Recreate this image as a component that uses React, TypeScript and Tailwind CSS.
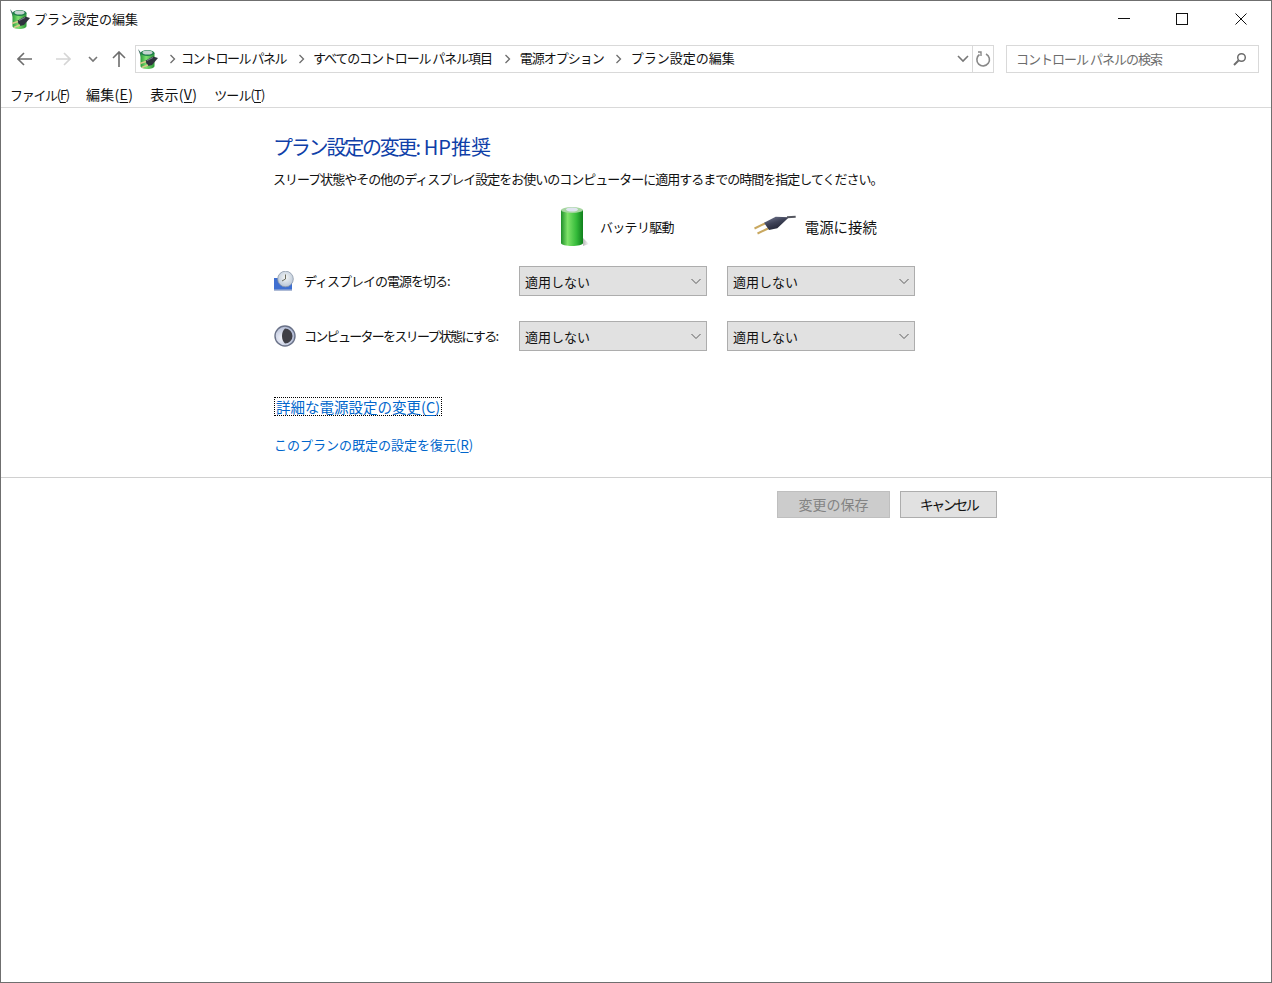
import React from 'react'

function PowerIcon({ id }: { id: string }) {
  return (
    <svg width="22" height="22" viewBox="0 0 22 22">
      <defs>
        <linearGradient id={id} x1="0" x2="1" y1="0" y2="0">
          <stop offset="0" stopColor="#2a9a3a" />
          <stop offset="0.4" stopColor="#7fe070" />
          <stop offset="1" stopColor="#2a9638" />
        </linearGradient>
      </defs>
      <path d="M1 1 L5 6 L4 9 Z" fill="#3f6a62" />
      <path d="M3.500 5 V18 C3.500 22 17.500 22 17.500 18 V5 Z" fill={`url(#${id})`} />
      <ellipse cx="10.500" cy="5" rx="7" ry="3" fill="#1f7f4a" />
      <ellipse cx="10.500" cy="4.500" rx="5" ry="2" fill="#c4d4d0" />
      <path d="M8 13 L16 8.500 L21 10 L15 17 L11 18 Z" fill="#2f333d" />
      <path d="M9 13.500 L3 15.500 M11 17 L5 19.500" stroke="#d8c88a" strokeWidth="1.600" />
      <path d="M10 12.500 L16 9.500" stroke="#7b8090" strokeWidth="1" />
    </svg>
  )
}

function Chevron({ className = '' }: { className?: string }) {
  return (
    <svg width="12" height="12" viewBox="0 0 12 12" className={className}>
      <path d="M1.500 4 L6 8.500 L10.500 4" fill="none" stroke="currentColor" strokeWidth="1" />
    </svg>
  )
}

function Crumb() {
  return (
    <svg width="7" height="10" viewBox="0 0 7 10" className="shrink-0 text-[#6d6d6d]">
      <path d="M1.500 1 L5.500 5 L1.500 9" fill="none" stroke="currentColor" strokeWidth="1.300" />
    </svg>
  )
}

function Dropdown() {
  return (
    <div className="flex h-[30px] w-[188px] items-center justify-between border border-[#adadad] bg-[#e1e1e1] pl-[5px] pr-[4px] text-[13px] leading-none">
      <span>適用しない</span>
      <Chevron className="text-[#5c5c5c]" />
    </div>
  )
}

function Underlined({ label, mark }: { label: string; mark: string }) {
  return (
    <>
      {label}(<span className="underline underline-offset-2">{mark}</span>)
    </>
  )
}

export default function App() {
  return (
    <div className="flex h-[983px] w-[1272px] flex-col overflow-hidden border border-[#6f6f6f] bg-white font-['Noto_Sans_CJK_JP','Liberation_Sans',sans-serif] text-[13px] text-[#111]">
      {/* Title bar */}
      <div className="flex h-[36px] shrink-0 items-center pl-[8px]">
        <PowerIcon id="mug-title" />
        <span className="mb-[2px] ml-[3px] leading-none">プラン設定の編集</span>
        <div className="ml-auto flex items-center">
          <svg width="12" height="12" viewBox="0 0 12 12" className="mr-[46px]">
            <path d="M0 5.500 H12" stroke="#111" strokeWidth="1" />
          </svg>
          <svg width="12" height="12" viewBox="0 0 12 12" className="mr-[47px]">
            <rect x="0.500" y="0.500" width="11" height="11" fill="none" stroke="#111" strokeWidth="1" />
          </svg>
          <svg width="12" height="12" viewBox="0 0 12 12" className="mr-[24px]">
            <path d="M0.500 0.500 L11.500 11.500 M11.500 0.500 L0.500 11.500" stroke="#111" strokeWidth="1" />
          </svg>
        </div>
      </div>

      {/* Address row */}
      <div className="mt-[8px] flex h-[28px] shrink-0 items-center">
        <svg width="16" height="14" viewBox="0 0 16 14" className="ml-[16px] text-[#6d6d6d]">
          <path d="M1 7 H15 M7 1 L1 7 L7 13" fill="none" stroke="currentColor" strokeWidth="1.600" />
        </svg>
        <svg width="16" height="14" viewBox="0 0 16 14" className="ml-[22px] text-[#d5d5d5]">
          <path d="M1 7 H15 M9 1 L15 7 L9 13" fill="none" stroke="currentColor" strokeWidth="1.600" />
        </svg>
        <svg width="10" height="7" viewBox="0 0 10 7" className="ml-[17px] text-[#777]">
          <path d="M1 1 L5 5 L9 1" fill="none" stroke="currentColor" strokeWidth="1.600" />
        </svg>
        <svg width="14" height="16" viewBox="0 0 14 16" className="ml-[14px] text-[#6d6d6d]">
          <path d="M7 16 V1 M1 7 L7 1 L13 7" fill="none" stroke="currentColor" strokeWidth="1.600" />
        </svg>
        <div className="ml-[9px] flex h-[28px] w-[859px] items-center border border-[#d9d9d9] pl-[1px]">
          <PowerIcon id="mug-address" />
          <span className="ml-[10px]"><Crumb /></span>
          <span className="mb-[2px] ml-[5px] tracking-[-1.500px]">コントロール パネル</span>
          <span className="ml-[12px]"><Crumb /></span>
          <span className="mb-[2px] ml-[8px] tracking-[-1.100px]">すべてのコントロール パネル項目</span>
          <span className="ml-[12px]"><Crumb /></span>
          <span className="mb-[2px] ml-[9px] tracking-[-1px]">電源オプション</span>
          <span className="ml-[11px]"><Crumb /></span>
          <span className="mb-[2px] ml-[9px]">プラン設定の編集</span>
          <div className="ml-auto flex h-full items-center">
            <svg width="12" height="8" viewBox="0 0 12 8" className="mr-[3px] text-[#777]">
              <path d="M1 1 L6 6 L11 1" fill="none" stroke="currentColor" strokeWidth="1.600" />
            </svg>
            <div className="flex h-full w-[21px] items-center justify-center border-l border-[#d9d9d9]">
              <svg width="16" height="16" viewBox="0 0 16 16" className="text-[#888]">
                <path d="M4.500 3.500 A6.300 6.300 0 1 0 11 3" fill="none" stroke="currentColor" strokeWidth="1.600" />
                <path d="M3 1 L6 1 L6 5" fill="none" stroke="currentColor" strokeWidth="1.400" />
              </svg>
            </div>
          </div>
        </div>
        <div className="ml-[12px] flex h-[28px] w-[253px] items-center justify-between border border-[#d9d9d9] pl-[9px] pr-[11px] text-[#6d6d6d]">
          <span className="tracking-[-1px]">コントロール パネルの検索</span>
          <svg width="14" height="14" viewBox="0 0 14 14">
            <circle cx="8.500" cy="5.500" r="3.800" fill="none" stroke="currentColor" strokeWidth="1.500" />
            <path d="M5.500 8.500 L1 13" stroke="currentColor" strokeWidth="2" />
          </svg>
        </div>
      </div>

      {/* Menu bar */}
      <div className="mt-[10px] flex h-[25px] shrink-0 items-center border-b border-[#d9d9d9] pb-[2px] pl-[9px] leading-none">
        <span className="tracking-[-1.300px]"><Underlined label="ファイル" mark="F" /></span>
        <span className="ml-[17px] text-[14px] tracking-[0.300px]"><Underlined label="編集" mark="E" /></span>
        <span className="ml-[17px] text-[14px] tracking-[0.300px]"><Underlined label="表示" mark="V" /></span>
        <span className="ml-[17px] tracking-[-0.900px]"><Underlined label="ツール" mark="T" /></span>
      </div>

      {/* Plan settings */}
      <div className="flex flex-col pl-[273px]">
        <h1 className="-ml-[1px] mt-[25px] h-[28px] text-[20px] font-normal leading-[28px] text-[#0f3fa8]">
          <span className="tracking-[-2.200px]">プラン設定の変更:</span>
          <span className="ml-[5px]">HP推奨</span>
        </h1>
        <p className="-ml-[1px] mt-[8px] h-[20px] leading-[20px] tracking-[-1px]">
          スリープ状態やその他のディスプレイ設定をお使いのコンピューターに適用するまでの時間を指定してください。
        </p>

        {/* Column headers */}
        <div className="mt-[18px] flex h-[40px] items-center">
          <svg width="30" height="42" viewBox="0 0 30 42" className="ml-[285px]">
            <defs>
              <linearGradient id="battery" x1="0" x2="1" y1="0" y2="0">
                <stop offset="0" stopColor="#1f8f2a" />
                <stop offset="0.3" stopColor="#7fe36a" />
                <stop offset="0.7" stopColor="#35bb3a" />
                <stop offset="1" stopColor="#0f7f1c" />
              </linearGradient>
              <linearGradient id="batteryShade" x1="0" x2="1" y1="0" y2="0">
                <stop offset="0" stopColor="#b8b8b8" />
                <stop offset="1" stopColor="#ffffff" />
              </linearGradient>
            </defs>
            <path d="M24 32 L30 38 L24 40 Z" fill="url(#batteryShade)" />
            <path d="M2 4 V37 C2 41 24 41 24 37 V4 Z" fill="url(#battery)" />
            <ellipse cx="13" cy="4" rx="11" ry="3" fill="#a6d6a0" />
            <ellipse cx="13" cy="3.500" rx="6" ry="2" fill="#dfe4f0" />
          </svg>
          <span className="ml-[11px] tracking-[-0.700px]">バッテリ駆動</span>
          <svg width="44" height="24" viewBox="0 0 44 24" className="ml-[80px]">
            <defs>
              <linearGradient id="plug" x1="0" x2="0.600" y1="0" y2="1">
                <stop offset="0" stopColor="#7a7f98" />
                <stop offset="0.500" stopColor="#3f4358" />
                <stop offset="1" stopColor="#1f2130" />
              </linearGradient>
            </defs>
            <path d="M0.500 13.500 L11 8.500 M3.500 18.500 L14 13.500" stroke="#c9a860" strokeWidth="2" />
            <path d="M10 7.700 L21.700 1.700 L35 2.300 L23.300 13.300 L15 15 Z" fill="url(#plug)" />
            <path d="M33 2.300 L41.700 1.700" stroke="#54565f" strokeWidth="2" />
          </svg>
          <span className="ml-[7px] text-[14.400px]">電源に接続</span>
        </div>

        {/* Power timeout rows */}
        <div className="mt-[19px] flex items-center">
          <svg width="22" height="20" viewBox="0 0 22 20">
            <defs>
              <radialGradient id="clock" cx="0.500" cy="0.400" r="0.600">
                <stop offset="0" stopColor="#f4f6f4" />
                <stop offset="1" stopColor="#b9c6d8" />
              </radialGradient>
            </defs>
            <rect x="0" y="7" width="18" height="13" fill="#3f6fd0" />
            <rect x="0" y="18.500" width="18" height="1.500" fill="#aebbd6" />
            <circle cx="11.500" cy="8" r="7.800" fill="url(#clock)" stroke="#8d99aa" strokeWidth="0.800" />
            <path d="M11.500 3.500 V8 L8 10" fill="none" stroke="#6a6a5c" strokeWidth="1" />
          </svg>
          <span className="mb-[1px] ml-[8px] w-[215px] tracking-[-1px]">ディスプレイの電源を切る:</span>
          <Dropdown />
          <div className="w-[20px]" />
          <Dropdown />
        </div>
        <div className="mt-[25px] flex items-center">
          <svg width="22" height="22" viewBox="0 0 22 22">
            <defs>
              <radialGradient id="moon" cx="0.350" cy="0.600" r="0.700">
                <stop offset="0" stopColor="#f2f4fb" />
                <stop offset="1" stopColor="#aab4d0" />
              </radialGradient>
            </defs>
            <circle cx="11" cy="11" r="10" fill="url(#moon)" stroke="#6a7288" strokeWidth="1.400" />
            <path d="M11 3.500 A7.500 7.500 0 0 1 11 18.500 C7 15 7 7 11 3.500 Z" fill="#3f3f46" />
          </svg>
          <span className="mb-[1px] ml-[8px] w-[215px] tracking-[-1.700px]">コンピューターをスリープ状態にする:</span>
          <Dropdown />
          <div className="w-[20px]" />
          <Dropdown />
        </div>

        {/* Links */}
        <a className="mt-[46px] flex h-[19px] w-fit items-center border border-dotted border-black px-[1px] text-[14.500px] text-[#0066cc]">
          詳細な電源設定の変更(<span className="underline underline-offset-2">C</span>)
        </a>
        <a className="mt-[19px] h-[20px] w-fit leading-[20px] text-[#0066cc]">
          このプランの既定の設定を復元(<span className="underline underline-offset-2">R</span>)
        </a>
      </div>

      {/* Footer */}
      <div className="mt-[22px] flex justify-end border-t border-[#d0d0d0] pr-[274px] pt-[13px]">
        <button className="flex h-[27px] w-[113px] items-center justify-center border border-[#bfbfbf] bg-[#cccccc] text-[14px] text-[#838383]">
          変更の保存
        </button>
        <button className="ml-[10px] flex h-[27px] w-[97px] items-center justify-center border border-[#adadad] bg-[#e1e1e1] text-[14px] tracking-[-2.500px]">
          キャンセル
        </button>
      </div>
    </div>
  )
}
